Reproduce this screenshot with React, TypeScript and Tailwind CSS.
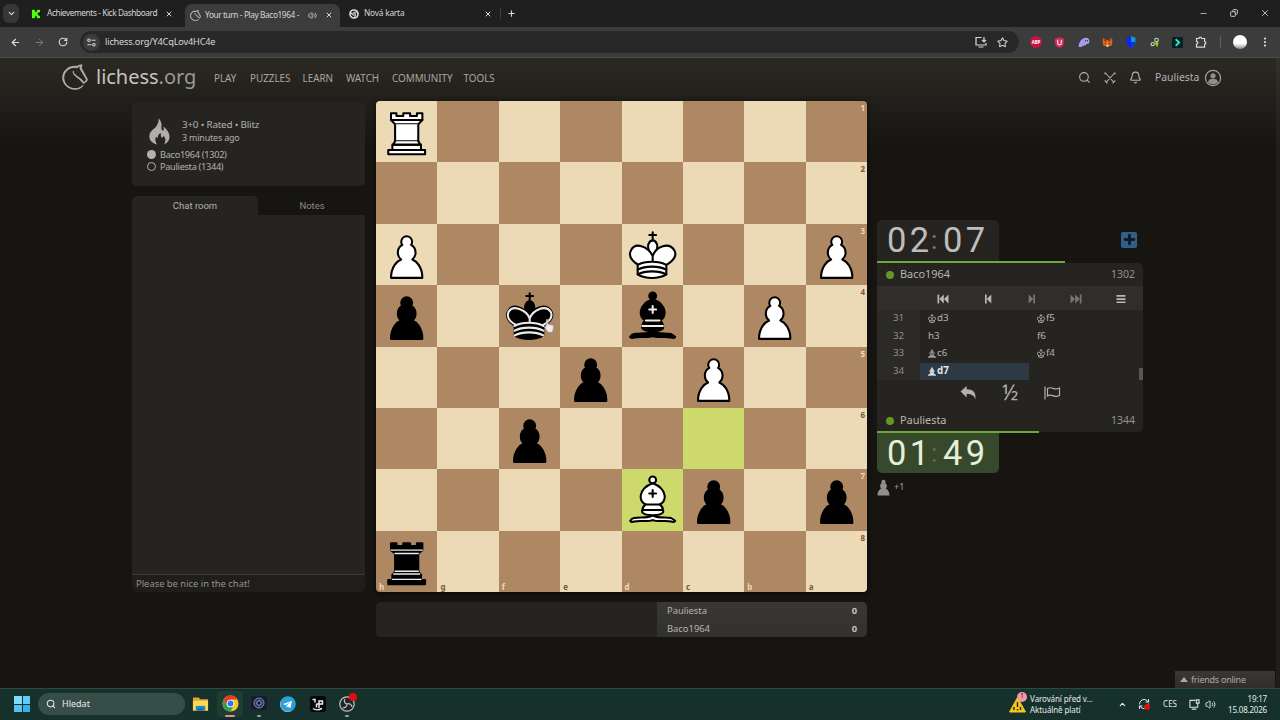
import type { ReactNode } from "react"
import {
  ArrowLeft,
  ArrowRight,
  Bell,
  ChevronDown,
  ChevronUp,
  Copy,
  EllipsisVertical,
  Minus,
  Plus,
  RefreshCw,
  RotateCw,
  Search,
  Star,
  Volume2,
  X,
} from "lucide-react"
import { FaTelegram } from "react-icons/fa"

type Color = "w" | "b"
type Role = "k" | "r" | "b" | "p"

const FILES = ["h", "g", "f", "e", "d", "c", "b", "a"]
const RANKS = [1, 2, 3, 4, 5, 6, 7, 8]

const PIECES: Record<string, [Color, Role]> = {
  h1: ["w", "r"],
  h3: ["w", "p"],
  d3: ["w", "k"],
  a3: ["w", "p"],
  h4: ["b", "p"],
  f4: ["b", "k"],
  d4: ["b", "b"],
  b4: ["w", "p"],
  e5: ["b", "p"],
  c5: ["w", "p"],
  f6: ["b", "p"],
  d7: ["w", "b"],
  c7: ["b", "p"],
  a7: ["b", "p"],
  h8: ["b", "r"],
}

const LAST_MOVE = ["c6", "d7"]

const MOVES = [
  { n: 31, white: ["k", "d3"], black: ["k", "f5"] },
  { n: 32, white: ["", "h3"], black: ["", "f6"] },
  { n: 33, white: ["b", "c6"], black: ["k", "f4"] },
  { n: 34, white: ["b", "d7"], black: null, active: true },
]

const NAV = [
  { label: "PLAY", width: "w-[36px]" },
  { label: "PUZZLES", width: "w-[52.5px]" },
  { label: "LEARN", width: "w-[43.5px]" },
  { label: "WATCH", width: "w-[46px]" },
  { label: "COMMUNITY", width: "w-[71.5px]" },
  { label: "TOOLS", width: "w-[40px]" },
]

const PAWN =
  "M22.5 9c-2.21 0-4 1.79-4 4 0 .89.29 1.71.78 2.38C17.33 16.5 16 18.59 16 21c0 2.03.94 3.84 2.41 5.03-3 1.06-7.41 5.55-7.41 13.47h23c0-7.92-4.41-12.41-7.41-13.47 1.47-1.19 2.41-3 2.41-5.03 0-2.41-1.33-4.5-3.28-5.62.49-.67.78-1.49.78-2.38 0-2.21-1.79-4-4-4z"
const BISHOP_BASE =
  "M9 36c3.39-.97 10.11.43 13.5-2 3.39 2.43 10.11 1.03 13.5 2 0 0 1.65.54 3 2-.68.97-1.65.99-3 .5-3.39-.97-10.11.46-13.5-1-3.39 1.46-10.11.03-13.5 1-1.354.49-2.323.47-3-.5 1.354-1.94 3-2 3-2z"
const BISHOP_BODY =
  "M15 32c2.5 2.5 12.5 2.5 15 0 .5-1.5 0-2 0-2 0-2.5-2.5-4-2.5-4 5.5-1.5 6-11.5-5-15.5-11 4-10.5 14-5 15.5 0 0-2.5 1.5-2.5 4 0 0-.5.5 0 2z"
const BISHOP_BALL = "M25 8a2.5 2.5 0 1 1-5 0 2.5 2.5 0 1 1 5 0z"
const KING_BODY =
  "M11.5 37c5.5 3.5 15.5 3.5 21 0v-7s9-4.5 6-10.5c-4-6.5-13.5-3.5-16 4V27v-3.5c-3.5-7.5-13-10.5-16-4-3 6 5 10 5 10V37z"
const KING_HEAD =
  "M22.5 25s4.5-7.5 3-10.5c0 0-1-2.5-3-2.5s-3 2.5-3 2.5c-1.5 3 3 10.5 3 10.5"

function Piece({ color, role }: { color: Color; role: Role }) {
  const white = color === "w"
  const detail = white ? "#000" : "#ececec"
  return (
    <svg
      viewBox="0 0 45 45"
      className="h-full w-full"
      fill={white ? "#fff" : "#000"}
      stroke="#000"
      strokeWidth="1.5"
      strokeLinecap="round"
      strokeLinejoin="round"
    >
      {role === "p" && <path d={PAWN} />}
      {role === "b" && (
        <>
          <path d={BISHOP_BASE} />
          <path d={BISHOP_BODY} />
          <path d={BISHOP_BALL} />
          <path d="M17.5 26h10M15 30h15m-7.5-14.5v5M20 18h5" fill="none" stroke={detail} strokeLinejoin="miter" />
        </>
      )}
      {role === "k" && (
        <>
          <path d="M22.5 11.63V6M20 8h5" strokeLinejoin="miter" />
          <path d={KING_HEAD} />
          <path d={KING_BODY} />
          {!white && (
            <path
              d="M32 29.5s8.5-4 6.03-9.65C34.15 14 25 18 22.5 24.5v2.1-2.1C20 18 9.906 14 6.997 19.85c-2.497 5.65 4.853 9 4.853 9"
              fill="none"
              stroke={detail}
            />
          )}
          <path
            d="M11.5 30c5.5-3 15.5-3 21 0m-21 3.5c5.5-3 15.5-3 21 0m-21 3.5c5.5-3 15.5-3 21 0"
            fill="none"
            stroke={detail}
          />
        </>
      )}
      {role === "r" && white && (
        <>
          <path
            strokeLinecap="butt"
            d="M9 39h27v-3H9v3zm3-3v-4h21v4H12zm-1-22V9h4v2h5V9h5v2h5V9h4v5"
          />
          <path d="M34 14l-3 3H14l-3-3" />
          <path d="M31 17v12.5H14V17" strokeLinecap="butt" strokeLinejoin="miter" />
          <path d="M31 29.5l1.5 2.5h-20l1.5-2.5" />
          <path d="M11 14h23" fill="none" />
        </>
      )}
      {role === "r" && !white && (
        <>
          <path strokeLinecap="butt" d="M9 39h27v-3H9v3zm3.5-7l1.5-2.5h17l1.5 2.5h-20zm-.5 4v-4h21v4H12z" />
          <path strokeLinecap="butt" strokeLinejoin="miter" d="M14 29.5v-13h17v13H14z" />
          <path d="M14 16.5L11 14h23l-3 2.5H14zM11 14V9h4v2h5V9h5v2h5V9h4v5H11z" strokeLinecap="butt" />
          <path
            d="M12 35.5h21m-20-4h19m-18-2h17m-17-13h17M11 14h23"
            fill="none"
            stroke={detail}
            strokeWidth="1"
            strokeLinejoin="miter"
          />
        </>
      )}
    </svg>
  )
}

function Figurine({ role, bold }: { role: string; bold?: boolean }) {
  if (!role) return null
  return (
    <svg
      viewBox="5 3 35 38"
      className="mr-px h-[9px] w-[8px]"
      fill={bold ? "currentColor" : "none"}
      fillOpacity="0.7"
      stroke="currentColor"
      strokeWidth="4"
    >
      {role === "k" ? (
        <path d={`M22.5 14V4M17 8h11 ${KING_BODY} M12 32h21`} />
      ) : (
        <path d={`${BISHOP_BASE} ${BISHOP_BODY} ${BISHOP_BALL} M15 29h15m-7.5-13v8M18 19h9`} />
      )}
    </svg>
  )
}

function KnightLogo({ className }: { className: string }) {
  return (
    <svg
      viewBox="-1 -1 52 52"
      className={className}
      fill="currentColor"
      stroke="currentColor"
      strokeWidth="1.8"
      strokeLinejoin="round"
    >
      <path d="M38.956.5c-3.53.418-6.452.902-9.286 2.984C5.534 1.786-.692 18.533.68 29.364 3.493 50.214 31.918 55.785 41.329 41.7c-7.444 7.696-19.276 8.752-28.323 3.084C3.959 39.116-.506 27.392 4.683 17.567 9.873 7.742 18.996 4.535 29.03 6.405c2.43-1.418 5.225-3.22 7.655-3.187l-1.694 4.86 12.752 21.37c-.439 5.654-5.459 6.112-5.459 6.112-.574-1.47-1.634-2.942-4.842-6.036-3.207-3.094-17.465-10.177-15.788-16.207-2.001 6.967 10.311 14.152 14.04 17.663 3.73 3.51 5.426 6.04 5.795 6.756 0 0 9.392-2.504 7.838-8.927L37.4 7.171z" />
    </svg>
  )
}

function TabBar() {
  return (
    <div className="flex h-[27px] items-end bg-[#1f1f1f] text-[8.3px] text-[#d6d6d6]">
      <div className="mb-[4px] ml-[3px] flex h-[19px] w-[16px] items-center justify-center rounded-md bg-[#373737]">
        <ChevronDown className="size-[9px]" strokeWidth={3} />
      </div>
      <div className="flex h-[27px] w-[166px] items-center pl-[12px]">
        <svg viewBox="0 0 12 12" className="size-[10px]">
          <rect width="12" height="12" fill="#0b120a" />
          <path d="M1 1h4v3h1V3h1V1h4v3H9v1H8v2h1v1h2v3H7V9H6V8H5v3H1z" fill="#53fc18" />
        </svg>
        <span className="ml-[6px] w-[118px] whitespace-nowrap tracking-[-0.42px]">Achievements - Kick Dashboard</span>
        <X className="size-[8px]" strokeWidth={3} />
      </div>
      <div className="flex h-[23px] w-[155px] items-center rounded-t-[7px] bg-[#3c3c3c] pb-[1px] pl-[5px]">
        <KnightLogo className="size-[11px] text-[#cfcfcf]" />
        <span className="ml-[4px] w-[99px] whitespace-nowrap tracking-[-0.4px]">Your turn - Play Baco1964 -</span>
        <Volume2 className="ml-[4px] size-[9px]" />
        <X className="ml-[8px] size-[8px]" strokeWidth={3} />
      </div>
      <div className="flex h-[27px] w-[156px] items-center pl-[9px]">
        <svg viewBox="0 0 12 12" className="size-[10px]" fill="none" stroke="#dcdcdc" strokeWidth="2">
          <circle cx="6" cy="6" r="4.8" />
          <circle cx="6" cy="6" r="1.5" strokeWidth="1.4" />
          <path d="M6 3.8h4.5M4 7 2 3.5M8 7l-2 4" strokeWidth="1.2" />
        </svg>
        <span className="ml-[5px] w-[120px] whitespace-nowrap tracking-[-0.2px]">Nová karta</span>
        <X className="size-[8px]" strokeWidth={3} />
      </div>
      <div className="mb-[8px] ml-[4px] h-[11px] w-px bg-[#3d3d3d]" />
      <Plus className="mb-[9px] ml-[6px] size-[9px]" strokeWidth={3} />
      <div className="mb-[9px] ml-auto flex items-center pr-[10px]">
        <Minus className="size-[9px]" />
        <Copy className="ml-[22px] size-[8px] -scale-x-100" strokeWidth={2.8} />
        <X className="ml-[22px] size-[10px]" />
      </div>
    </div>
  )
}

function Toolbar() {
  return (
    <div className="flex h-[31px] items-center border-b border-[#4a4a4a] bg-[#3c3c3c] text-[#d8d8d8]">
      <ArrowLeft className="ml-[10px] size-[11px]" strokeWidth={2.6} />
      <ArrowRight className="ml-[13px] size-[11px] text-[#808080]" />
      <RotateCw className="ml-[13px] size-[10px]" strokeWidth={2.8} />
      <div className="ml-[12px] flex h-[22px] w-[939px] items-center rounded-full bg-[#282828]">
        <div className="ml-[3px] flex size-[17px] items-center justify-center rounded-full bg-[#3c3c3c]">
          <svg viewBox="0 0 12 12" className="size-[9px]" fill="none" stroke="#d0d0d0" strokeWidth="1.4">
            <circle cx="2.6" cy="3" r="1.7" />
            <circle cx="9.2" cy="9" r="1.7" />
            <path d="M6 3h5.5M.5 9H6" />
          </svg>
        </div>
        <span className="ml-[5px] text-[9.2px] tracking-[-0.18px]">lichess.org/Y4CqLov4HC4e</span>
        <svg viewBox="0 0 12 12" className="ml-auto size-[12px]" fill="none" stroke="currentColor" strokeWidth="1.2">
          <path d="M6.500 1.500H1V9h10V7M3.500 11h5M9 1v4.500M7 3.800l2 2 2-2" />
        </svg>
        <Star className="mr-[11px] ml-[10px] size-[11px]" strokeWidth={2.2} />
      </div>
      <div className="ml-[11px] flex w-[217px] shrink-0 items-center justify-between">
        <svg viewBox="0 0 12 12" className="size-[12px]">
          <path d="M3.6.3h4.8l3.3 3.3v4.8l-3.3 3.3H3.6L.3 8.4V3.6z" fill="#c8133f" />
          <text x="6" y="7.7" textAnchor="middle" fontSize="4.4" fontWeight="700" fill="#fff">ABP</text>
        </svg>
        <svg viewBox="0 0 12 12" className="size-[11px]">
          <path d="M6 .3 11 2v4.2C11 9 8.500 11 6 12 3.500 11 1 9 1 6.200V2z" fill="#d42a5c" />
          <path d="M4 3v3.500a2 2 0 0 0 4 0V3" fill="none" stroke="#f8dfe6" strokeWidth="1.300" />
        </svg>
        <svg viewBox="0 0 12 12" className="size-[12px]">
          <path d="M.5 10.500C1.200 5.500 4 1.800 8 1.800c2.500 0 3.800 1.800 3.400 4-.4 2.200-2 2.400-3 2.300C7.500 10 6 10.200 5.600 9.200 4.500 10.800 2 11.600.5 10.500z" fill="#a99bea" />
          <path d="M7.600 4v1.500M9.500 4v1.500" stroke="#3c3c3c" />
        </svg>
        <svg viewBox="0 0 12 12" className="size-[11px]">
          <path d="m1 .5 4 3.100h2L11 .5l.3 5.500-1.300 4-2.600-.8H4.600L2 10 .7 6z" fill="#e4671b" />
          <path d="m1 .5 4 3.100L3.500 6zM11 .5 7 3.600 8.500 6z" fill="#8f3d10" />
          <path d="M3 7h1.500v1H3zM7.500 7H9v1H7.500z" fill="#3a2418" />
          <path d="M4.600 8.500h2.800l-.5 2.500H5.100z" fill="#f3d6c0" />
        </svg>
        <svg viewBox="0 0 12 12" className="size-[12px]">
          <path d="M1.500 1.600 6 .2V12C3 10.500 1.500 8.500 1.500 5.500z" fill="#0b26f4" />
          <path d="m6 .2 4.500 1.400v3.900C10.500 8.500 9 10.500 6 12z" fill="#1593cf" />
          <path d="M6 6h4.400C10.200 8.800 8.800 10.600 6 12z" fill="#0a38dd" />
        </svg>
        <svg viewBox="0 0 12 12" className="size-[10px]" fill="none" strokeWidth="1.300">
          <circle cx="3.200" cy="8.500" r="2" stroke="#c9d6b8" />
          <circle cx="7.800" cy="3.600" r="2.200" stroke="#c9d6b8" />
          <path d="M5 8h5M8.500 6v5.500" stroke="#96d816" strokeWidth="2" />
        </svg>
        <svg viewBox="0 0 12 12" className="size-[11px]">
          <rect width="12" height="12" rx="1.500" fill="#04201f" />
          <path d="m4 2.500 3.800 3.500L4 9.500" fill="none" stroke="#2fe8c8" strokeWidth="2" />
        </svg>
        <svg viewBox="0 0 12 12" className="size-[12px]" fill="none" stroke="currentColor" strokeWidth="1.200">
          <path d="M1.500 2.500H4a1.300 1.300 0 0 1 2.600 0h3v3a1.300 1.300 0 0 1 0 2.600v3H1.500V8.200a1.400 1.400 0 0 0 0-2.800z" />
        </svg>
        <div className="h-[12px] w-px bg-[#606060]" />
        <div className="size-[14px] rounded-full bg-linear-to-b from-white from-60% to-[#8e8e8e]" />
      </div>
      <EllipsisVertical className="ml-[12px] size-[12px] shrink-0" strokeWidth={2.5} />
    </div>
  )
}

function SiteHeader() {
  return (
    <header className="flex h-[39px] items-center pl-[62px] text-[#b4b2af]">
      <KnightLogo className="mb-[2px] size-[26px]" />
      <span className="mb-[2px] ml-[8px] w-[118px] text-[20px] leading-none tracking-[-0.02px] text-[#c6c4c1]">
        lichess<span className="text-[#9b9996]">.org</span>
      </span>
      <nav className="flex pt-px text-[9.900px] tracking-[-0.02px] text-[#a8a6a3]">
        {NAV.map((item) => (
          <span key={item.label} className={item.width}>
            {item.label}
          </span>
        ))}
      </nav>
      <div className="mr-[58px] ml-auto flex items-center">
        <Search className="size-[13px]" />
        <svg viewBox="0 0 12 12" className="ml-[13px] size-[12px]" fill="none" stroke="currentColor" strokeWidth="1.100">
          <path d="M1 .500 10 10.500M11 .500 2 10.500M.800 8.500 3.500 11.300M11.200 8.500 8.500 11.300M1 .500v1.800M11 .500v1.800" />
        </svg>
        <Bell className="ml-[13px] size-[13px]" />
        <span className="ml-[13px] w-[49px] text-[10.400px]">Pauliesta</span>
        <svg viewBox="0 0 18 18" className="size-[18px]">
          <circle cx="9" cy="9" r="7.600" fill="none" stroke="#a3a19e" strokeWidth="1.200" />
          <circle cx="9" cy="6.800" r="2.600" fill="#8f8e8b" />
          <path d="M4 13.500c.3-2.800 2-3.800 5-3.800s4.700 1 5 3.800c-2.500 2.400-7.500 2.400-10 0z" fill="#8f8e8b" />
        </svg>
      </div>
    </header>
  )
}

function GameMeta() {
  return (
    <section className="h-[84px] rounded-[5px] bg-[#262421] pt-[14px] pl-[14px] text-[#b3b1ae]">
      <div className="flex h-[32px]">
        <svg viewBox="0 0 22 27" className="mt-[2px] ml-[3px] h-[27px] w-[21px]" fill="#b0aeab">
          <path d="M10 0c5 4.500 2.300 8.600 3.300 11.500.6 1.700 2.200 1.300 2.200-.5 0-1.200-.3-2-.6-2.800 3 2 6.600 6 6.600 10.600 0 4.200-2.600 7-5.700 8.200 2.200-4 1.700-6.500-.8-9.300.2 2-1 2.800-2 1.700-1-1-.3-2.400-.8-4.200-2.700 1.400-3 3.300-2.700 5.200-1-.2-1.600-.8-2-1.600-1.500 3-.8 5.600.9 8.200C3.500 26 .4 23 .4 18.800c0-6 4.600-7 7.300-10.800C9.500 5.400 10.300 3 10 0z" />
        </svg>
        <div className="ml-[12px]">
          <div className="h-[13px] text-[9.800px] leading-[17px] tracking-[-0.18px]">3+0 • Rated • Blitz</div>
          <div className="text-[8.900px] leading-[17px] tracking-[-0.15px]">3 minutes ago</div>
        </div>
      </div>
      <div className="flex h-[12px] items-center pt-px text-[9.200px] tracking-[-0.3px]">
        <span className="mr-[4px] ml-px size-[9px] rounded-full bg-[#b3b1ae]" />
        Baco1964 (1302)
      </div>
      <div className="flex h-[12px] items-center pt-px text-[9.200px] tracking-[-0.3px]">
        <span className="mr-[4px] ml-px size-[9px] rounded-full border-[1.500px] border-[#b3b1ae]" />
        Pauliesta (1344)
      </div>
    </section>
  )
}

function Chat() {
  return (
    <section className="mt-[10px] h-[396px] overflow-hidden rounded-[5px]">
      <div className="flex h-[19px] text-center font-[Roboto] text-[9.500px] leading-[20px]">
        <div className="w-[126px] rounded-t-[5px] bg-[#262421] text-[#b3b1ae]">Chat room</div>
        <div className="flex-1 pl-px text-[#8b8986]">Notes</div>
      </div>
      <div className="h-[359px] bg-[#262421]" />
      <div className="h-[18px] border-t border-[#3c3a37] bg-[#201e1b] pl-[4px] text-[9.400px] leading-[18px] text-[#94928f]">
        Please be nice in the chat!
      </div>
    </section>
  )
}

function Board() {
  return (
    <div className="relative grid h-[491px] grid-cols-8 grid-rows-8 overflow-hidden rounded-[4px] shadow-[0_1px_5px_rgba(0,0,0,0.7)]">
      {RANKS.map((rank, y) =>
        FILES.map((file, x) => {
          const key = file + rank
          const light = (x + y) % 2 === 0
          const piece = PIECES[key]
          const bg = LAST_MOVE.includes(key) ? "bg-[#cdd96b]" : light ? "bg-[#ebdab5]" : "bg-[#ae8763]"
          const coord = light ? "text-[#805534]" : "text-[#ebdab5]"
          return (
            <div key={key} className={`relative ${bg}`}>
              {x === 7 && (
                <span className={`absolute top-[1px] right-[2px] text-[8px] leading-[11px] font-bold ${coord}`}>
                  {rank}
                </span>
              )}
              {y === 7 && (
                <span className={`absolute bottom-0 left-[3px] text-[8px] leading-[11px] font-bold ${coord}`}>
                  {file}
                </span>
              )}
              {piece && (
                <div className="relative h-full w-full">
                  <Piece color={piece[0]} role={piece[1]} />
                </div>
              )}
            </div>
          )
        }),
      )}
      {/* mouse cursor over f4 */}
      <svg viewBox="0 0 12 16" className="absolute top-[217px] left-[168px] h-[16px] w-[11px]">
        <path
          d="M2.500 1.500c0-1 1.800-1 1.800 0V6l5 1c1 .3 1.400 1 1.200 2l-.8 4.500c-.2 1-1 1.500-2 1.500H5.500c-1 0-1.500-.5-2-1.300L.8 9.500C.3 8.500 1.500 8 2.200 8.800z"
          fill="#ededed"
          stroke="#8c8c8c"
          strokeWidth=".8"
        />
      </svg>
    </div>
  )
}

function Crosstable() {
  return (
    <div className="mt-[10px] flex h-[35px] overflow-hidden rounded-[5px] bg-[#262421] text-[9.400px] text-[#b5b3b0]">
      <div className="w-[281px]" />
      <div className="flex-1 bg-linear-to-b from-[#3a3835] to-[#33312e] pr-[10px] pl-[10px]">
        <div className="flex h-[18px] items-center justify-between">
          Pauliesta <b className="font-bold text-[#c5c3c0]">0</b>
        </div>
        <div className="flex h-[18px] items-center justify-between">
          Baco1964 <b className="font-bold text-[#c5c3c0]">0</b>
        </div>
      </div>
    </div>
  )
}

function Clock({ min, sec, running }: { min: string; sec: string; running?: boolean }) {
  return (
    <div
      className={
        running
          ? "h-[40px] w-[122px] rounded-b-[5px] bg-[#38482b] pl-[10px] font-[Roboto] text-[34.500px] leading-[40px] tracking-[3.300px] text-[#e4efdc]"
          : "h-[41px] w-[122px] rounded-t-[5px] bg-[#262421] pl-[10px] font-[Roboto] text-[34.500px] leading-[41px] tracking-[3.300px] text-[#bfbdba]"
      }
    >
      <div className="flex">
        <span className="w-[44px]">{min}</span>
        <span className={running ? "w-[12px] text-[26px] text-[#5f7048]" : "w-[12px] text-[26px] text-[#7d7b78]"}>:</span>
        <span>{sec}</span>
      </div>
    </div>
  )
}

function Player({ name, rating }: { name: string; rating: number }) {
  return (
    <div className="flex h-[23px] items-center bg-[#262421] pr-[8px] pl-[9px] text-[#b9b7b4]">
      <span className="size-[8px] rounded-full bg-[#629924]" />
      <span className="ml-[6px] text-[10.900px]">{name}</span>
      <span className="ml-auto text-[10.500px] text-[#93918e]">{rating}</span>
    </div>
  )
}

function NavButton({ dim, children }: { dim?: boolean; children: ReactNode }) {
  return (
    <div className={dim ? "flex flex-1 justify-center text-[#777572]" : "flex flex-1 justify-center text-[#bab8b5]"}>
      <svg viewBox="0 0 12 10" className="h-[10px] w-[12px]" fill="currentColor">
        {children}
      </svg>
    </div>
  )
}

function MoveList() {
  return (
    <div className="bg-[#262421] text-[9.800px] text-[#b3b1ae]">
      <div className="flex h-[24px] items-center bg-[#302e2b] pt-px pl-[44px]">
        <NavButton>
          <path d="M.5.500h1.700v9H.5zM6.800.500v9L2.300 5zM11.500.500v9L7 5z" />
        </NavButton>
        <NavButton>
          <path d="M3 .500h1.700v9H3zM9.300.500v9L4.800 5z" />
        </NavButton>
        <NavButton dim>
          <path d="M7.300.500H9v9H7.300zM2.700.500v9L7.200 5z" />
        </NavButton>
        <NavButton dim>
          <path d="M9.800.500h1.700v9H9.800zM5.200.500v9L9.700 5zM.5.500v9L5 5z" />
        </NavButton>
        <NavButton>
          <path d="M1.500 1h9v1.700h-9zM1.500 4.200h9v1.700h-9zM1.500 7.400h9v1.700h-9z" />
        </NavButton>
      </div>
      <div className="relative">
        {MOVES.map((m) => (
          <div key={m.n} className="flex h-[17.500px] items-center">
            <div className="flex h-full w-[43px] items-center justify-center bg-[#2c2a27] text-[#908e8b]">{m.n}</div>
            <div
              className={
                m.active
                  ? "flex h-full w-[109px] items-center bg-[#2d3a43] pl-[8px] font-bold text-[#e2e6e9]"
                  : "flex h-full w-[109px] items-center pl-[8px]"
              }
            >
              <Figurine role={m.white[0]} bold={m.active} />
              {m.white[1]}
            </div>
            {m.black && (
              <div className="flex items-center pl-[8px]">
                <Figurine role={m.black[0]} />
                {m.black[1]}
              </div>
            )}
          </div>
        ))}
        <div className="absolute right-0 bottom-0 h-[12px] w-[4px] bg-[#5a5855]" />
      </div>
    </div>
  )
}

function Controls() {
  return (
    <div className="flex h-[29px] items-center bg-[#262421] pb-[4px] pl-[83px] text-[#b3b1ae]">
      <svg viewBox="0 0 18 15" className="h-[14px] w-[17px]" fill="currentColor">
        <path d="M7 0v3.600c6.500 0 10.500 3 9.300 10.900C15 10 12 8.600 7 8.700v3.500L.5 6z" />
      </svg>
      <span className="ml-[25px] w-[18px] text-[21px] leading-none">½</span>
      <svg
        viewBox="0 0 17 14"
        className="ml-[24px] h-[14px] w-[17px]"
        fill="none"
        stroke="currentColor"
        strokeWidth="1.200"
      >
        <path d="M1 .500v13M3.500 2.500c2.500-1.500 4-.8 6 0s3.500.8 6-.5v7.500c-2.500 1.200-4 1.200-6 .4s-3.500-1.400-6 0z" />
      </svg>
    </div>
  )
}

function GameTable() {
  return (
    <section className="mt-[119px]">
      <div className="flex items-center">
        <Clock min="02" sec="07" />
        <div className="mr-[6px] mb-[2px] ml-auto flex size-[16px] items-center justify-center rounded-[2px] bg-[#2f6089]">
          <Plus className="size-[15px] text-[#14191d]" strokeWidth={4.500} />
        </div>
      </div>
      <div className="h-[2px] w-[188px] bg-[#6da93a]" />
      <div className="overflow-hidden rounded-r-[5px]">
        <Player name="Baco1964" rating={1302} />
        <MoveList />
        <Controls />
        <Player name="Pauliesta" rating={1344} />
      </div>
      <div className="-mt-px h-[2px] w-[162px] bg-[#6da93a]" />
      <Clock min="01" sec="49" running />
      <div className="mt-[6px] flex items-center text-[9px] text-[#a3a19e]">
        <svg viewBox="10 8 25 32" className="h-[17px] w-[13px]" fill="#918f8c">
          <path d={PAWN} />
        </svg>
        <span className="mb-[2px] ml-[4px]">+1</span>
      </div>
    </section>
  )
}

function ChromeIcon() {
  return (
    <svg viewBox="0 0 18 18" className="size-[17px]">
      <circle cx="9" cy="9" r="8.500" fill="#f7c52b" />
      <path d="M1.600 4.800A8.500 8.500 0 0 1 16.400 4.800H9L5.400 11z" fill="#e33b2e" />
      <path d="M1.600 4.800A8.500 8.500 0 0 0 9 17.500L12.600 11 5.400 11z" fill="#2da14c" />
      <circle cx="9" cy="9" r="4.100" fill="#fff" />
      <circle cx="9" cy="9" r="3.200" fill="#3577e5" />
    </svg>
  )
}

function Taskbar() {
  return (
    <div className="flex h-[32px] items-center border-t border-[#2a4a42] bg-[#16302b] pb-px text-[#e6ebe9]">
      <div className="ml-[14px] grid size-[16px] grid-cols-2 gap-px">
        <div className="bg-[#7fdcfa]" />
        <div className="bg-[#5ccdf6]" />
        <div className="bg-[#50c5f3]" />
        <div className="bg-[#31b1ee]" />
      </div>
      <div className="ml-[8px] flex h-[22px] w-[147px] items-center rounded-full bg-[#374e48] pl-[8px] text-[9px]">
        <Search className="size-[10px]" strokeWidth={2.500} />
        <span className="ml-[6px]">Hledat</span>
      </div>
      <svg viewBox="0 0 18 16" className="ml-[7px] h-[16px] w-[17px]">
        <path d="M1 1h6l2 2h8v12H1z" fill="#e0a526" />
        <path d="M1 4.500h16V15H1z" fill="#fbd75a" />
        <path d="M4 10h10v5H4z" fill="#2489c9" />
        <path d="M6 12.500h6V15H6z" fill="#1b6aa5" />
      </svg>
      <div className="ml-[8px] flex h-[26px] w-[26px] flex-col items-center rounded-[3px] bg-[#213b35] pt-[4px]">
        <ChromeIcon />
        <div className="mt-[3px] h-[2px] w-[10px] rounded-full bg-[#e88d96]" />
      </div>
      <div className="ml-[7px] flex h-[26px] w-[17px] flex-col items-center pt-[4px]">
        <svg viewBox="0 0 16 16" className="size-[16px]">
          <rect y="1" width="16" height="14" rx="2" fill="#171c2c" />
          <circle cx="8" cy="8" r="5" fill="#2c3557" stroke="#7c88b8" />
          <circle cx="8" cy="8" r="2.300" fill="#10152a" stroke="#8fa3dd" />
        </svg>
        <div className="mt-[4px] h-[2px] w-[4px] rounded-full bg-[#93a39f]" />
      </div>
      <div className="ml-[13px] flex size-[15px] items-center justify-center rounded-full bg-white">
        <FaTelegram className="size-[16px] shrink-0 text-[#2aa1da]" />
      </div>
      <svg viewBox="0 0 16 16" className="ml-[15px] size-[16px]">
        <rect width="16" height="16" rx="3" fill="#050706" />
        <path d="M2.500 3.500H5v3M6.500 7.500v4M9 12V5h3.500v3H7M3 12.500c2 1.500 6 1.500 9 0" fill="none" stroke="#eee" strokeWidth="1.400" />
      </svg>
      <div className="relative ml-[13px] flex h-[26px] w-[16px] flex-col items-center pt-[5px]">
        <svg viewBox="0 0 16 16" className="size-[16px]" fill="none" stroke="#c4c7c6" strokeWidth="1.200">
          <circle cx="8" cy="8" r="7.200" fill="#222426" />
          <path d="M8 8C5.500 7.500 4.500 5 6 3M8 8c2.500-1 5 .5 5 3M8 8c0 2.500-2 4.500-4.500 3.500" />
        </svg>
        <div className="mt-[3px] h-[2px] w-[4px] shrink-0 rounded-full bg-[#93a39f]" />
        <div className="absolute top-[2px] -right-[2px] size-[8px] rounded-full bg-[#e00d10]" />
      </div>

      <div className="ml-auto flex items-center pr-[13px]">
        <div className="relative">
          <svg viewBox="0 0 17 17" className="h-[17px] w-[17px]">
            <path d="M8.500 1.500 16.500 16H.5z" fill="#f1c81f" stroke="#f1c81f" strokeLinejoin="round" />
            <path d="M8.500 6v5M8.500 13v1.500M5 11v3M11.500 11v3" stroke="#292515" strokeWidth="1.400" />
          </svg>
          <div className="absolute -top-[4px] -right-px flex size-[10px] items-center justify-center rounded-full bg-[#f498a4] text-[7px] text-[#35191d]">
            1
          </div>
        </div>
        <div className="ml-[4px] w-[88px] leading-[11px] whitespace-nowrap text-[8px] tracking-[-0.1px]">
          Varování před v...
          <br />
          Aktuálně platí
        </div>
        <ChevronUp className="size-[9px]" strokeWidth={3} />
        <div className="relative ml-[11px]">
          <RefreshCw className="size-[12px]" />
          <div className="absolute right-0 bottom-0 size-[6px] rounded-full bg-[#e00d10]" />
        </div>
        <span className="ml-[13px] w-[26px] text-[8px]">CES</span>
        <svg viewBox="0 0 12 12" className="size-[11px]" fill="none" stroke="#d9dfdd" strokeWidth="1.200">
          <path d="M7 1.500H1v7.500h8.500V6M3 11h5M8 1h3v3.500H8zM9.500 4.500V7" />
        </svg>
        <Volume2 className="ml-[5px] size-[11px]" />
        <div className="ml-[12px] text-right leading-[11px] whitespace-nowrap text-[8px] tracking-[-0.2px]">
          19:17
          <br />
          15.08.2026
        </div>
      </div>
    </div>
  )
}

export default function App() {
  return (
    <div className="flex h-[720px] w-[1280px] flex-col overflow-hidden bg-[#161512] font-['Noto_Sans','Open_Sans',sans-serif]">
      <TabBar />
      <Toolbar />
      <main className="relative flex-1 bg-linear-to-b from-[#2c2923] to-[#161512] to-[90px]">
        <SiteHeader />
        <div className="mt-[4px] grid grid-cols-[233px_491px_266px] pl-[132px]">
          <div className="mt-px">
            <GameMeta />
            <Chat />
          </div>
          <div className="ml-[11px] w-[491px]">
            <Board />
            <Crosstable />
          </div>
          <div className="ml-[21px] w-[266px]">
            <GameTable />
          </div>
        </div>
        {/* scrollbar track */}
        <div className="absolute inset-y-0 right-0 w-[4px] bg-white/4" />
        <div className="absolute right-[5px] bottom-0 flex h-[17px] w-[100px] items-center bg-linear-to-b from-[#3a3834] to-[#302e2b] pl-[5px] text-[9px] tracking-[-0.25px] text-[#aaa8a5]">
          <svg viewBox="0 0 8 5" className="mr-[3px] h-[5px] w-[8px]" fill="currentColor">
            <path d="M4 0l4 5H0z" />
          </svg>
          friends online
        </div>
      </main>
      <Taskbar />
    </div>
  )
}
